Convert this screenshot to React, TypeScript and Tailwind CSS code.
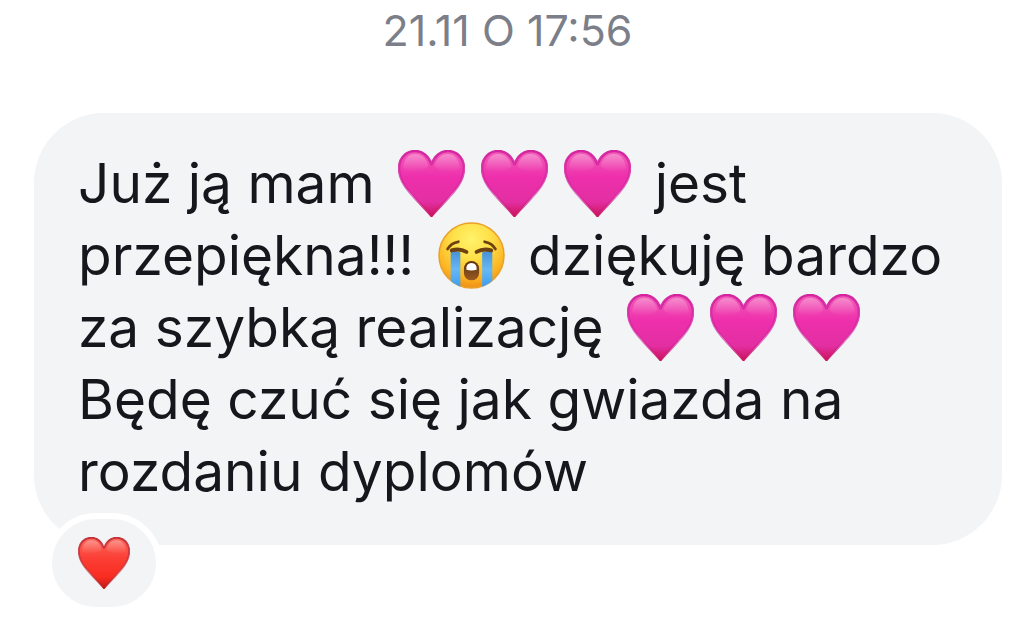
import { useId } from 'react'

const HEART_COLORS = {
  pink: { top: '#f25fb9', mid: '#ee2fac', low: '#e32fa2', tip: '#cc1560', edge: '#d4249f' },
  red: { top: '#fb6a5e', mid: '#fb3f36', low: '#f92c20', tip: '#c41a18', edge: '#c4303a' },
}

const HEART_PATH =
  'M33 65C30 61 18 49.500 11 41C5 34 1 27 1 18C1 8 8 1 17 1C24 1 30 6 33 14C36 6 42 1 49 1C58 1 65 8 65 18C65 27 61 34 55 41C48 49.500 36 61 33 65Z'

function Heart({ color, className }: { color: keyof typeof HEART_COLORS; className: string }) {
  const id = useId()
  const c = HEART_COLORS[color]

  return (
    <svg viewBox="0 0 66 66" role="img" aria-label={color === 'pink' ? '🩷' : '❤️'} className={className}>
      <defs>
        <linearGradient id={`${id}-fill`} x1="0" y1="0" x2="0" y2="1">
          <stop offset="0" stopColor={c.top} />
          <stop offset="0.4" stopColor={c.mid} />
          <stop offset="0.78" stopColor={c.low} />
          <stop offset="1" stopColor={c.tip} />
        </linearGradient>
        <linearGradient id={`${id}-shine`} x1="0" y1="0" x2="0" y2="1">
          <stop offset="0" stopColor="#fff" stopOpacity="0.3" />
          <stop offset="1" stopColor="#fff" stopOpacity="0" />
        </linearGradient>
        <linearGradient id={`${id}-edge`} x1="0" y1="0" x2="0" y2="1">
          <stop offset="0" stopColor={c.edge} />
          <stop offset="0.7" stopColor={c.edge} stopOpacity="0.6" />
          <stop offset="1" stopColor={c.tip} />
        </linearGradient>
      </defs>
      <path d={HEART_PATH} fill={`url(#${id}-fill)`} stroke={`url(#${id}-edge)`} strokeWidth="2.500" strokeLinejoin="round" />
      <path d="M5 18C6 8 11 4 17 4C23 4 28 8 30 16C24 22 11 23 5 18Z" fill={`url(#${id}-shine)`} />
      <path d="M36 16C38 8 43 4 49 4C55 4 60 8 61 18C55 23 42 22 36 16Z" fill={`url(#${id}-shine)`} />
    </svg>
  )
}

function CryingFace({ className }: { className: string }) {
  const id = useId()

  return (
    <svg viewBox="0 0 66 66" role="img" aria-label="😭" className={className}>
      <defs>
        <radialGradient id={`${id}-face`} cx="0.5" cy="0.25" r="0.75">
          <stop offset="0" stopColor="#fff36b" />
          <stop offset="0.4" stopColor="#ffdf48" />
          <stop offset="0.8" stopColor="#fcb321" />
          <stop offset="1" stopColor="#ee8e18" />
        </radialGradient>
        <linearGradient id={`${id}-tear`} x1="0" y1="0" x2="0" y2="1">
          <stop offset="0" stopColor="#4690d6" />
          <stop offset="0.5" stopColor="#67b8f4" />
          <stop offset="1" stopColor="#3a9df0" />
        </linearGradient>
        <linearGradient id={`${id}-mouth`} x1="0" y1="0" x2="0" y2="1">
          <stop offset="0" stopColor="#5a3210" />
          <stop offset="1" stopColor="#9a5b22" />
        </linearGradient>
        <clipPath id={`${id}-clip`}>
          <circle cx="33" cy="33" r="32.500" />
        </clipPath>
      </defs>
      <circle cx="33" cy="33" r="32" fill={`url(#${id}-face)`} stroke="#eba02a" strokeWidth="1.500" />
      <g clipPath={`url(#${id}-clip)`}>
        <path d="M12.500 29Q17 27 22 30V65H12.500Z" fill={`url(#${id}-tear)`} />
        <path d="M43.500 30Q49 27 53.500 29V65H43.500Z" fill={`url(#${id}-tear)`} />
      </g>
      <g fill="none" stroke="#6e4210" strokeLinecap="round">
        <path d="M9.500 26.500Q13 20.500 20 19.500" strokeWidth="2.800" />
        <path d="M46 19.500Q53 20.500 56.500 26.500" strokeWidth="2.800" />
        <path d="M13.500 28Q21 25.500 28 29.500" strokeWidth="3.800" />
        <path d="M38 29.500Q45 25.500 52.500 28" strokeWidth="3.800" />
      </g>
      <rect x="25.500" y="38.500" width="15" height="19" rx="7.500" fill={`url(#${id}-mouth)`} />
      <path d="M28 47Q27.500 40.500 33 40.500Q38.500 40.500 38 47Q33 48.500 28 47Z" fill="#fff" />
    </svg>
  )
}

const EMOJI_CLASS = 'inline-block size-[67px] mx-2 align-[-14px]'

function PinkHearts() {
  return (
    <span className="whitespace-nowrap">
      {[0, 1, 2].map((i) => (
        <Heart key={i} color="pink" className={EMOJI_CLASS} />
      ))}
    </span>
  )
}

export default function App() {
  return (
    <main className="min-h-screen bg-white pt-[6px] pb-3 font-['Inter','Liberation_Sans',sans-serif]">
      <time className="block pr-3 text-center text-[43px] leading-[48px] text-[#7c7f89]">21.11 O 17:56</time>

      <article className="relative mt-[59px] mr-[25px] ml-[34px]">
        <p className="rounded-[70px] bg-[#f3f4f6] px-11 pt-[34px] pb-[38px] text-[55px] leading-[72px] text-[#15171c]">
          Już ją mam <PinkHearts /> jest przepiękna!!! <CryingFace className={EMOJI_CLASS} /> dziękuję bardzo za szybką
          realizację <PinkHearts /> Będę czuć się jak gwiazda na rozdaniu dyplomów
        </p>

        <button
          type="button"
          aria-label="Reakcja: serce"
          className="absolute -bottom-[68px] left-3 flex h-[100px] w-[116px] items-center justify-center rounded-full border-6 border-white bg-[#f3f4f6]"
        >
          <Heart color="red" className="size-[52px]" />
        </button>
      </article>
    </main>
  )
}
